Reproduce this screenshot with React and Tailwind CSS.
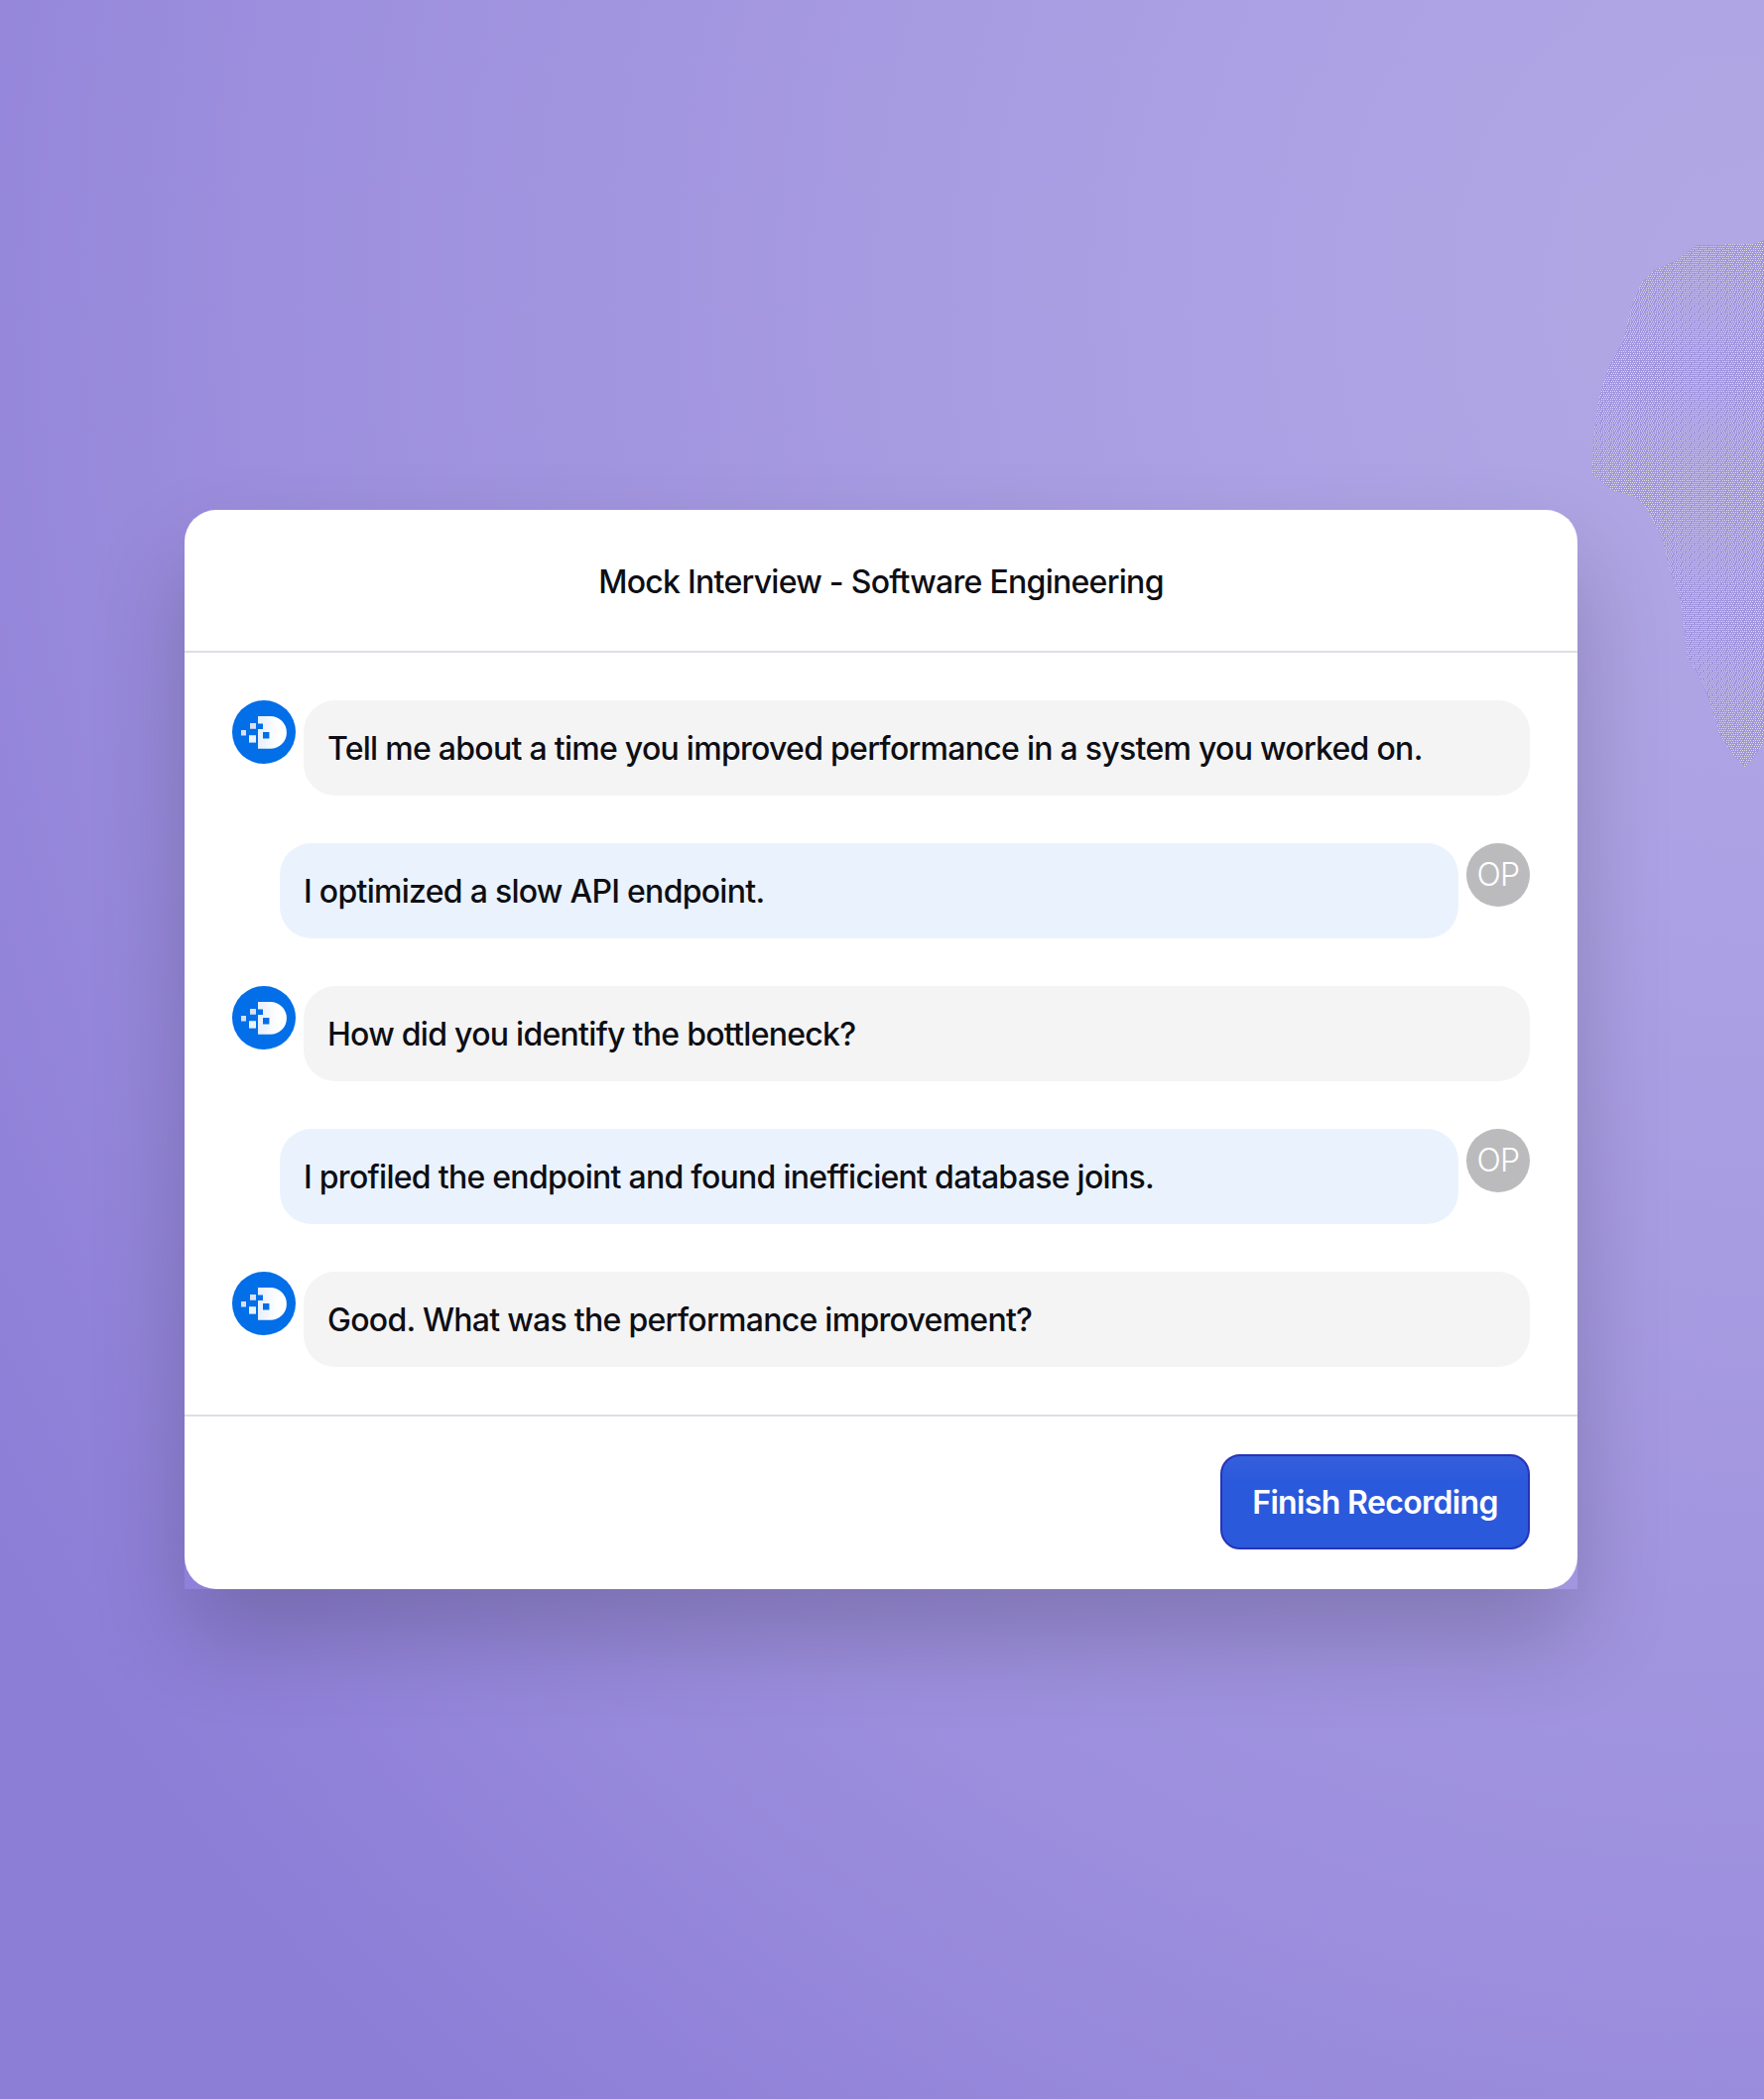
import React from "react";

const messages = [
  { from: "ai", text: "Tell me about a time you improved performance in a system you worked on." },
  { from: "user", text: "I optimized a slow API endpoint." },
  { from: "ai", text: "How did you identify the bottleneck?" },
  { from: "user", text: "I profiled the endpoint and found inefficient database joins." },
  { from: "ai", text: "Good. What was the performance improvement?" },
];

// Dotted highlight on the right edge of the backdrop
function Grain() {
  return (
    <svg viewBox="0 0 178 540" className="absolute top-[242px] right-0 w-[178px] h-[540px]" shapeRendering="crispEdges">
      <defs>
        <pattern id="dots" width="9" height="8" patternUnits="userSpaceOnUse">
          <rect width="9" height="8" fill="#a195e1" />
          <path
            d="M0 0h1v1h-1zM2 0h1v1h-1zM5 0h1v1h-1zM7 0h1v1h-1zM1 2h1v1h-1zM3 2h1v1h-1zM5 2h1v1h-1zM7 2h1v1h-1zM0 4h1v1h-1zM2 4h1v1h-1zM4 4h1v1h-1zM7 4h1v1h-1zM1 6h1v1h-1zM3 6h1v1h-1zM6 6h1v1h-1zM8 6h1v1h-1z"
            fill="#dcdce2"
          />
        </pattern>
      </defs>
      <path
        d="M178 0L168 4 110 5 90 20 66 31 54 44 44 69 37 100 22 128 13 155 7 190 5 236 25 252 47 258 60 270 76 302 83 333 95 366 101 420 112 438 124 466 134 500 148 520 158 531 168 522 178 505z"
        fill="url(#dots)"
      />
    </svg>
  );
}

function BotAvatar() {
  return (
    <svg viewBox="0 0 64 64" className="size-16 shrink-0">
      <defs>
        <linearGradient id="logo-d" x1="26" x2="46" y1="0" y2="0" gradientUnits="userSpaceOnUse">
          <stop stopColor="#e6effc" />
          <stop offset="1" stopColor="#ffffff" />
        </linearGradient>
      </defs>
      <circle cx="32" cy="32" r="32" fill="#026ee8" />
      <path d="M26 16h12.5a16.4 16.4 0 0 1 0 32.8H26z" fill="url(#logo-d)" />
      <path d="M26 23.5h5v5.5h-5zM31 32h6.4v6.6H31z" fill="#026ee8" />
      <path d="M17 35.2h7v7.4h-7z" fill="#ebf3fd" />
      <path d="M18 23h6v5.8h-6zM9 30h5v5.6H9z" fill="#dcdff0" />
    </svg>
  );
}

function UserAvatar() {
  return (
    <div className="size-16 shrink-0 rounded-full bg-[#bbbbbd] flex items-center justify-center text-white text-[32px] leading-none font-light tracking-[-0.02em]">
      OP
    </div>
  );
}

function Message({ from, text }) {
  const isUser = from === "user";

  return (
    <div className={`flex items-start gap-2 ${isUser ? "pl-12" : ""}`}>
      {!isUser && <BotAvatar />}
      <div
        className={`flex-1 h-24 px-6 pt-0.5 rounded-[32px] flex items-center whitespace-nowrap ${
          isUser ? "bg-[#eaf3fd]" : "bg-[#f4f4f4]"
        }`}
      >
        {text}
      </div>
      {isUser && <UserAvatar />}
    </div>
  );
}

export default function App() {
  return (
    <div className="relative w-[1778px] h-[2116px] overflow-hidden pt-[514px] pl-[186px] bg-[radial-gradient(2500px_2800px_at_1778px_300px,#b2a8e4_0%,#aca1e4_22%,#9c8edd_62%,#8c7dd7_84%)] font-['Inter',sans-serif] font-[450] text-[32px] leading-12 tracking-[-0.0225em] text-[#0e0e14]">
      <Grain />
      <div className="w-[1404px] rounded-t-[32px] bg-linear-to-r from-[#8f80da] to-[#a396e0] shadow-[0_48px_96px_rgba(0,0,0,0.2)]">
        <div className="bg-white rounded-[32px]">
          {/* Header */}
          <div className="h-36 border-b-2 border-[#dcdfe5] pt-1 flex items-center justify-center">
            <h1 className="font-[450]">Mock Interview - Software Engineering</h1>
          </div>

          {/* Conversation */}
          <div className="p-12 space-y-12">
            {messages.map((m) => (
              <Message key={m.text} from={m.from} text={m.text} />
            ))}
          </div>

          {/* Footer */}
          <div className="border-t-2 border-[#dcdfe5] pt-[38px] pb-10 px-12 flex justify-end">
            <button className="w-[312px] h-24 pt-0.5 rounded-[20px] border-2 border-[#2733b8] bg-linear-to-b from-[#345fdd] to-[#2b59db] to-30% text-white font-semibold tracking-[-0.02em]">
              Finish Recording
            </button>
          </div>
        </div>
      </div>
    </div>
  );
}
